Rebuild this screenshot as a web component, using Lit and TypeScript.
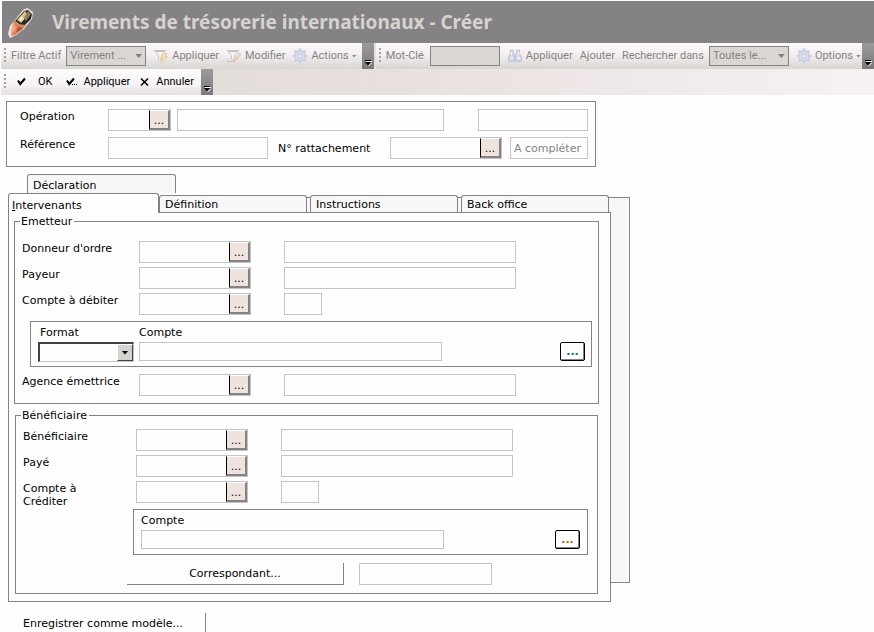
import { LitElement, html, css, svg } from "lit";
import { customElement } from "lit/decorators.js";
import { classMap } from "lit/directives/class-map.js";

const check = svg`<path d="M2 4.500 L4.200 8 L9 2.500" fill="none" stroke="#000" stroke-width="2"/>`;
const checkDots = svg`<path d="M1 4.500 L3.200 8 L8 2.500" fill="none" stroke="#000" stroke-width="2"/><path d="M6 8h1v1h-1zM8 8h1v1h-1zM10 8h1v1h-1z"/>`;
const cross = svg`<path d="M2 2.500 L9 9.500 M9 2.500 L2 9.500" fill="none" stroke="#000" stroke-width="1.500"/>`;
const funnel = svg`<path d="M1 2.500h12l-4.500 5v5l-3-1.500v-3.500z" fill="#f4f2f2" stroke="#c9c6c8"/><path d="M3 3.500h8" stroke="#b9b7bb"/>`;
const funnelBolt = svg`${funnel}<path d="M10 5.500h4l-2 3h2.500l-6.500 6.500 2-4.500h-2.500z" fill="#f6e3ae" stroke="#dcc69a" stroke-width=".7"/>`;
const funnelPen = svg`${funnel}<path d="M15 6l-5.500 7-2 1.500.3-2.500 5.500-7z" fill="#f3dfbd" stroke="#d8b9b0" stroke-width=".8"/><path d="M1 13.500h7" stroke="#a9a7a9" stroke-dasharray="1 1"/>`;
const gear = svg`<g fill="#cfcfe4"><circle cx="8" cy="8" r="5.800"/>${[0, 45, 90, 135].map(
  (a) => svg`<rect x="6.400" y=".5" width="3.200" height="15" rx="1" transform="rotate(${a} 8 8)"/>`
)}</g><circle cx="8" cy="8" r="4" fill="#dcdcf0"/><circle cx="8" cy="8" r="2" fill="#f2f0f6" stroke="#bcbcd6" stroke-width=".8"/>`;
const binoculars = svg`<g fill="#d3d5e4" stroke="#bdc0d4" stroke-width=".8"><path d="M3.500 2h3v3l1 2v6.500h-6v-5l2-3.500z"/><path d="M9.500 2h3v3l2 3.500v5h-6v-6.500l1-2z"/></g><path d="M3 10h3M10 10h3M4.500 4v3M11.500 4v3" stroke="#f5f5fb" stroke-width="1.300"/>`;

const icon = (shape: unknown, size = 16) =>
  html`<svg class="icon" width=${size} height=${size} viewBox="0 0 ${size} ${size}" aria-hidden="true">${shape}</svg>`;

@customElement("app-root")
export class AppRoot extends LitElement {
  static styles = css`
    :host {
      display: block;
      min-height: 100vh;
      background: #fefefe;
      overflow: hidden;
      color: #000;
      font: 11px/13px "DejaVu Sans", Verdana, sans-serif;
    }
    * { box-sizing: border-box; }
    button, input, select { font: inherit; color: inherit; margin: 0; padding: 0; border-radius: 0; }
    .icon { display: block; flex: none; }

    .title {
      display: flex;
      align-items: center;
      gap: 16px;
      height: 42px;
      margin: 1px 0 0 2px;
      padding-left: 4px;
      background: #848284;
      color: #d6d3ce;
    }
    h1 { margin: 0; font: bold 19px/24px "Noto Sans", Tahoma, sans-serif; white-space: nowrap; }

    .dock {
      background: linear-gradient(90deg, #dedad6, #e8e0de 45%, #f7f1f3);
      font: 11px/14px Roboto, Tahoma, sans-serif;
      margin-left: 1px;
    }
    .bars { display: flex; height: 26px; gap: 2px; }
    .bar {
      display: flex;
      align-items: center;
      padding-left: 3px;
      background: linear-gradient(#fdf9fa, #f3eff0 45%, #d9d5d0);
      color: #848284;
      white-space: nowrap;
    }
    .bar.wide { flex: 1; }
    .bar.live { color: #000; background: linear-gradient(#fffdfe, #f6f1f3 60%, #e6e1df); }
    .grip { flex: none; width: 2px; height: 16px; margin-right: 5px; background: repeating-linear-gradient(#a5a2a5 0 2px, transparent 2px 4px); }
    .tool { display: flex; align-items: center; gap: 3px; border: 0; background: none; height: 22px; margin-left: 7px; }
    .live .tool { gap: 5px; margin-left: 9px; }
    .live .tool.ok { gap: 10px; margin-left: 5px; }
    .live .tool.apply { margin-left: 14px; }
    .caret { flex: none; width: 5px; height: 3px; background: currentColor; clip-path: polygon(0 0, 100% 0, 50% 100%); }
    .more {
      display: flex; align-items: flex-end; justify-content: center; flex: none;
      width: 12px; height: 26px; margin-left: auto; border: 0; padding-bottom: 2px;
      background: linear-gradient(#9c9a9c, #7b797b);
    }
    .bar .gap { margin-left: 5px; }
    .live .gap { margin-left: 7px; }
    .pick { position: relative; display: flex; width: 80px; height: 20px; margin-left: 5px; }
    .pick select { width: 100%; appearance: none; border: 1px solid #848284; background: #dcd6d2; padding-left: 3px; opacity: 1; color: #848284; }
    .pick .caret { position: absolute; right: 4px; top: 8px; width: 7px; height: 4px; pointer-events: none; }
    .keyword { width: 70px; height: 20px; margin-left: 6px; border: 1px solid #848284; background: #dcd6d2; }

    .form { max-width: 630px; padding: 6px 0 0 6px; }
    .field { display: block; height: 22px; min-width: 0; width: 100%; border: 1px solid #c6c3c6; background: #fefefe; }
    .field.low { height: 19px; }
    .hint { padding-left: 3px; }
    .hint::placeholder { color: #848284; opacity: 1; }
    .lookup { display: flex; height: 22px; border: 1px solid #c6c3c6; }
    .lookup input { flex: 1; min-width: 0; border: 0; background: none; }
    .lookup button {
      width: 21px; border: solid; border-width: 1px 2px 2px 1px;
      border-color: #fff #848284 #848284 #000; background: #efe3de; padding-top: 2px;
    }
    .head { margin-right: 34px; border: 1px solid #848284; padding: 7px 7px 7px 13px; height: 66px; display: grid; gap: 6px; }
    .line { display: grid; height: 22px; }
    .line.op { grid-template-columns: 88px 63px 6px 1fr 34px 110px; }
    .line.ref { grid-template-columns: 88px 160px 10px 1fr 112px 8px 78px; }
    .line label, .row label { padding-top: 1px; }
    .line label.mid { align-self: center; padding: 0; }

    .top-tabs { display: flex; padding: 7px 0 0 21px; }
    .tab {
      width: 148px; height: 17px; padding: 1px 0 0 5px; text-align: left;
      border: 1px solid #848284; border-bottom: 0; border-radius: 3px 3px 0 0; background: #f7f7f7;
    }
    .tab.upper { width: 149px; height: 19px; padding-top: 3px; }
    .tab.active { width: 151px; height: 20px; margin-bottom: -1px; padding: 3px 0 0 3px; background: #fefefe; }
    .tab.active::first-letter { text-decoration: underline; }
    .tab.spaced { margin-left: 3px; }
    .book { display: grid; margin-left: 2px; }
    .back { grid-area: 1 / 1; margin: 4px 0 19px 19px; border: 1px solid #848284; background: #f7f7f7; box-shadow: inset -1px -1px #fefefe; }
    .front { grid-area: 1 / 1; position: relative; margin-right: 19px; }
    .tabs { display: flex; align-items: flex-end; height: 19px; position: relative; }
    .panel { border: 1px solid #848284; background: #fefefe; padding: 2px 11px 7px 5px; }

    fieldset { min-width: 0; margin: 0; border: 1px solid #848284; padding: 13px 6px 7px 7px; }
    fieldset.second { margin: 5px 1px 0 1px; padding: 7px 9px 8px 7px; }
    legend { margin-left: -2px; padding: 0 2px 0 1px; height: 13px; }
    .row { display: grid; grid-template-columns: 117px 112px 33px 232px; min-height: 22px; align-items: start; }
    .row + .row { margin-top: 4px; }
    .row label { padding-right: 16px; }
    .second .row { grid-template-columns: 113px 112px 33px 232px; }
    .row .short { width: 38px; }
    .second .row label { padding-right: 24px; }
    .sub {
      display: grid; grid-template-columns: 96px 303px 1fr 25px; column-gap: 5px; grid-template-rows: 20px 20px;
      height: 46px; margin: 6px 0 7px 8px; padding: 0 6px 0 7px; border: 1px solid #848284; align-items: start;
    }
    .sub label { padding-top: 4px; }
    .sub .name { padding-left: 2px; }
    .sub .acc { grid-column: 2 / 5; }
    .second .sub { grid-template-columns: 303px 1fr 25px; margin: 1px 0 8px 110px; padding-right: 7px; }
    .second .sub .acc { grid-column: 1 / 4; }
    .format { position: relative; display: block; height: 20px; }
    .format select {
      width: 100%; height: 20px; appearance: none; background: #fefefe;
      border: solid; border-width: 2px 1px 1px 2px; border-color: #424142 #c6c3c6 #c6c3c6 #424142;
    }
    .drop {
      position: absolute; right: 1px; top: 2px; width: 16px; height: 17px; pointer-events: none;
      display: grid; place-items: center; background: #d6d3ce;
      border: 1px solid; border-color: #fff #424142 #424142 #fff;
    }
    .drop .caret { width: 7px; height: 4px; }
    .dots { width: 25px; height: 19px; border: 1px solid #000; border-radius: 2px; background: #fefefe; box-shadow: inset -1px -1px #848284; font-weight: bold; color: #10619c; grid-column: -2; }
    .dots.amber { color: #b56510; }
    .partner { display: grid; grid-template-columns: 217px 133px; gap: 15px; margin-left: 104px; }
    .flat { height: 22px; border: 0 solid #848284; border-width: 0 1px 1px 0; background: none; }
    .save { display: block; width: 198px; height: 20px; margin: 11px 0 0 2px; padding-left: 15px; text-align: left; border: 0; border-right: 1px solid #848284; background: none; }
  `;

  private lookup(id: string) {
    return html`<div class="lookup"><input id=${id} type="text" /><button aria-label="Rechercher">...</button></div>`;
  }

  private row(id: string, label: string, short = false) {
    return html`<div class="row">
      <label for=${id}>${label}</label>${this.lookup(id)}<span></span>
      <input class=${classMap({ field: true, short })} type="text" aria-label="${label}, libellé" />
    </div>`;
  }

  private more() {
    return html`<button class="more" aria-label="Plus">
      <svg width="8" height="8" viewBox="0 0 8 8"><path d="M1 1h6v1h-6zM1 3h6l-3 3.500z" /><path d="M2 2.500h6M4.500 7l3-3" stroke="#fff" fill="none" /></svg>
    </button>`;
  }

  render() {
    return html`
      <header class="title">
        <svg class="icon" width="30" height="32" viewBox="0 0 30 32" aria-hidden="true">
          <path d="M17 4l4-2 6 4-1 7-8 10-8 6-6 3-2-4 2-8z" fill="#e9e7e4" />
          <path d="M18 5l4-1 4 4-1 5-8 8-8-6z" fill="#2c2926" />
          <path d="M19 5l3 4-7 8-4-3z" fill="#d8c47c" />
          <path d="M22 5l3 3-5 7-2-3z" fill="#8d7c64" />
          <path d="M15 10l3 3-3 2-2-2z" fill="#f3e9c4" />
          <path d="M8 14l4 4 8 1-4 5-7 5-4 1 1-7z" fill="#d98258" />
          <path d="M7 16l3 6-4 7-1-3z" fill="#f0a884" />
          <path d="M12 21l5 1-4 3-3 1z" fill="#a9532f" />
        </svg>
        <h1>Virements de trésorerie internationaux - Créer</h1>
      </header>
      <nav class="dock">
        <div class="bars">
          <div class="bar">
            <span class="grip"></span><label for="filter">Filtre Actif</label>
            <span class="pick"><select id="filter" disabled><option>Virement ...</option></select><span class="caret"></span></span>
            <button class="tool">${icon(funnelBolt)}Appliquer</button>
            <button class="tool">${icon(funnelPen)}Modifier</button>
            <button class="tool">${icon(gear)}Actions<span class="caret"></span></button>
            <span class="gap"></span>${this.more()}
          </div>
          <div class="bar wide">
            <span class="grip"></span><label for="keyword">Mot-Clé</label>
            <input class="keyword" id="keyword" type="text" disabled />
            <button class="tool">${icon(binoculars)}Appliquer</button>
            <button class="tool">Ajouter</button>
            <label class="tool" for="scope">Rechercher dans</label>
            <span class="pick"><select id="scope" disabled><option>Toutes le...</option></select><span class="caret"></span></span>
            <button class="tool">${icon(gear)}Options<span class="caret"></span></button>
            ${this.more()}
          </div>
        </div>
        <div class="bars">
          <div class="bar live">
            <span class="grip"></span>
            <button class="tool ok">${icon(check, 12)}OK</button>
            <button class="tool apply">${icon(checkDots, 12)}Appliquer</button>
            <button class="tool">${icon(cross, 12)}Annuler</button>
            <span class="gap"></span>${this.more()}
          </div>
        </div>
      </nav>
      <main class="form">
        <section class="head">
          <div class="line op">
            <label for="op">Opération</label>${this.lookup("op")}<span></span>
            <input class="field" type="text" aria-label="Libellé opération" /><span></span>
            <input class="field" type="text" aria-label="Statut" />
          </div>
          <div class="line ref">
            <label for="ref">Référence</label><input class="field" id="ref" type="text" /><span></span>
            <label class="mid" for="link">N° rattachement</label>${this.lookup("link")}<span></span>
            <input class="field hint" type="text" placeholder="A compléter" aria-label="État" />
          </div>
        </section>
        <div class="top-tabs"><button class="tab upper">Déclaration</button></div>
        <div class="book">
          <div class="back"></div>
          <div class="front">
            <div class="tabs">
              <button class="tab active">Intervenants</button>
              <button class="tab">Définition</button>
              <button class="tab spaced">Instructions</button>
              <button class="tab spaced">Back office</button>
            </div>
            <div class="panel">
              <fieldset>
                <legend>Emetteur</legend>
                ${this.row("orderer", "Donneur d'ordre")} ${this.row("payer", "Payeur")}
                ${this.row("debit", "Compte à débiter", true)}
                <div class="sub">
                  <label class="name" for="format">Format</label><label class="acc" for="account">Compte</label>
                  <span class="format"><select id="format"><option></option></select><span class="drop"><span class="caret"></span></span></span>
                  <input class="field low" id="account" type="text" />
                  <button class="dots" aria-label="Détail du compte">...</button>
                </div>
                ${this.row("agency", "Agence émettrice")}
              </fieldset>
              <fieldset class="second">
                <legend>Bénéficiaire</legend>
                ${this.row("beneficiary", "Bénéficiaire")} ${this.row("paid", "Payé")}
                ${this.row("credit", "Compte à Créditer", true)}
                <div class="sub">
                  <label class="acc" for="account2">Compte</label>
                  <input class="field low" id="account2" type="text" />
                  <button class="dots amber" aria-label="Détail du compte">...</button>
                </div>
                <div class="partner">
                  <button class="flat">Correspondant...</button>
                  <input class="field" type="text" aria-label="Correspondant" />
                </div>
              </fieldset>
            </div>
          </div>
        </div>
        <button class="save">Enregistrer comme modèle...</button>
      </main>
    `;
  }
}
